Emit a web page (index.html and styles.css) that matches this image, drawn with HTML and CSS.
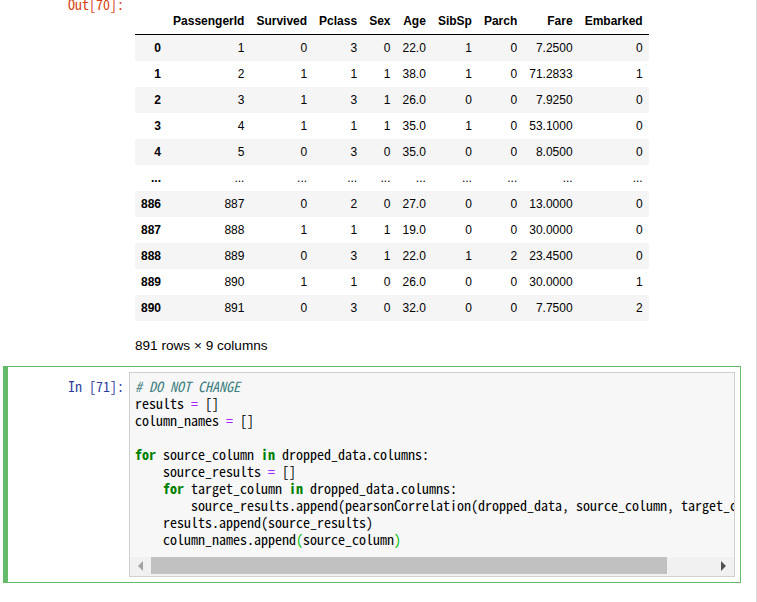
FILE: index.html
```html
<!DOCTYPE html>
<html>
<head>
<meta charset="utf-8">
<link rel="stylesheet" href="styles.css">
</head>
<body>
<div class="page">
  <div class="cell first">
    <div class="row">
      <div class="prompt out-prompt">Out[70]:</div>
      <div class="sub">
        <table class="df">
          <thead>
            <tr><th></th><th>PassengerId</th><th>Survived</th><th>Pclass</th><th>Sex</th><th>Age</th><th>SibSp</th><th>Parch</th><th>Fare</th><th>Embarked</th></tr>
          </thead>
          <tbody>
            <tr><th>0</th><td>1</td><td>0</td><td>3</td><td>0</td><td>22.0</td><td>1</td><td>0</td><td>7.2500</td><td>0</td></tr>
            <tr><th>1</th><td>2</td><td>1</td><td>1</td><td>1</td><td>38.0</td><td>1</td><td>0</td><td>71.2833</td><td>1</td></tr>
            <tr><th>2</th><td>3</td><td>1</td><td>3</td><td>1</td><td>26.0</td><td>0</td><td>0</td><td>7.9250</td><td>0</td></tr>
            <tr><th>3</th><td>4</td><td>1</td><td>1</td><td>1</td><td>35.0</td><td>1</td><td>0</td><td>53.1000</td><td>0</td></tr>
            <tr><th>4</th><td>5</td><td>0</td><td>3</td><td>0</td><td>35.0</td><td>0</td><td>0</td><td>8.0500</td><td>0</td></tr>
            <tr><th>...</th><td>...</td><td>...</td><td>...</td><td>...</td><td>...</td><td>...</td><td>...</td><td>...</td><td>...</td></tr>
            <tr><th>886</th><td>887</td><td>0</td><td>2</td><td>0</td><td>27.0</td><td>0</td><td>0</td><td>13.0000</td><td>0</td></tr>
            <tr><th>887</th><td>888</td><td>1</td><td>1</td><td>1</td><td>19.0</td><td>0</td><td>0</td><td>30.0000</td><td>0</td></tr>
            <tr><th>888</th><td>889</td><td>0</td><td>3</td><td>1</td><td>22.0</td><td>1</td><td>2</td><td>23.4500</td><td>0</td></tr>
            <tr><th>889</th><td>890</td><td>1</td><td>1</td><td>0</td><td>26.0</td><td>0</td><td>0</td><td>30.0000</td><td>1</td></tr>
            <tr><th>890</th><td>891</td><td>0</td><td>3</td><td>0</td><td>32.0</td><td>0</td><td>0</td><td>7.7500</td><td>2</td></tr>
          </tbody>
        </table>
        <p class="meta">891 rows × 9 columns</p>
      </div>
    </div>
  </div>
  <div class="cell selected">
    <div class="row">
      <div class="prompt in-prompt">In [71]:</div>
      <div class="editor">
<pre class="code"><span class="cm"># DO NOT CHANGE</span>
results <span class="op">=</span> []
column_names <span class="op">=</span> []

<span class="kw">for</span> source_column <span class="kw">in</span> dropped_data.columns:
    source_results <span class="op">=</span> []
    <span class="kw">for</span> target_column <span class="kw">in</span> dropped_data.columns:
        source_results.append(pearsonCorrelation(dropped_data, source_column, target_column))
    results.append(source_results)
    column_names.append<span class="mb">(</span>source_column<span class="mb">)</span></pre>
        <div class="hscroll">
          <div class="sb-btn"><span class="arr-left"></span></div>
          <div class="thumb"></div>
          <div class="track"></div>
          <div class="sb-btn"><span class="arr-right"></span></div>
        </div>
      </div>
    </div>
  </div>
</div>
</body>
</html>
```
FILE: styles.css
```css
html, body {
  margin: 0;
  padding: 0;
  background: #fff;
  overflow: hidden;
}

.page {
  display: flow-root;
  width: 757px;
  min-height: 602px;
  box-sizing: border-box;
  padding: 0 15px 0 3px;
  border-right: 1px solid #d9d9d9;
}

.cell {
  position: relative;
  border: 1px solid transparent;
  padding: 5px;
}

.cell.first {
  margin-top: -10px;
}

.cell.selected {
  border-color: #66BB6A;
}

.cell.selected::before {
  content: "";
  position: absolute;
  left: -1px;
  top: -1px;
  bottom: -1px;
  width: 5px;
  background: #66BB6A;
}

.row {
  display: flex;
  align-items: flex-start;
}

.prompt {
  flex: 0 0 120px;
  box-sizing: border-box;
  padding-right: 5px;
  text-align: right;
  font-family: "Noto Sans Mono CJK KR", "Noto Sans Mono CJK JP", monospace;
  font-size: 14px;
  line-height: 17px;
  white-space: nowrap;
}

.out-prompt {
  color: #D84315;
}

.in-prompt {
  color: #303F9F;
  padding-top: 6px;
}

.sub {
  flex: 1;
  min-width: 0;
  padding: 12px 0 6px 6px;
}

.df {
  border-collapse: separate;
  border-spacing: 0;
  font-family: "Liberation Sans", Arial, sans-serif;
  font-size: 12px;
  color: #000;
}

.df th,
.df td {
  padding: 6px;
  line-height: 14px;
  text-align: right;
  white-space: nowrap;
  font-weight: normal;
}

.df th {
  font-weight: bold;
}

.df thead th {
  border-bottom: 1px solid #000;
}

.df tbody tr:nth-child(odd) {
  background: #f5f5f5;
}

.meta {
  margin: 17px 0 0;
  font-family: "Liberation Sans", Arial, sans-serif;
  font-size: 13.6px;
  line-height: 16px;
  color: #000;
}

.editor {
  flex: 0 0 606px;
  box-sizing: border-box;
  border: 1px solid #cfcfcf;
  background: #f7f7f7;
  overflow: hidden;
}

.code {
  margin: 0;
  padding: 5px 0 9px 5px;
  font-family: "Noto Sans Mono CJK KR", "Noto Sans Mono CJK JP", monospace;
  font-size: 14px;
  line-height: 17px;
  white-space: pre;
  overflow: hidden;
  color: #000;
}

.cm {
  color: #408080;
  font-style: italic;
}

.kw {
  color: #008000;
  font-weight: bold;
}

.op {
  color: #AA22FF;
}

.mb {
  color: #00bb00;
}

.hscroll {
  display: flex;
  height: 19px;
  background: #f1f1f1;
}

.sb-btn {
  flex: 0 0 21px;
  height: 17px;
  display: flex;
  align-items: center;
  justify-content: center;
}

.thumb {
  flex: 0 0 516px;
  height: 17px;
  background: #c1c1c1;
}

.track {
  flex: 1;
}

.arr-left {
  width: 0;
  height: 0;
  border-top: 5px solid transparent;
  border-bottom: 5px solid transparent;
  border-right: 5px solid #a3a3a3;
}

.arr-right {
  width: 0;
  height: 0;
  border-top: 5px solid transparent;
  border-bottom: 5px solid transparent;
  border-left: 5px solid #505050;
}
```
